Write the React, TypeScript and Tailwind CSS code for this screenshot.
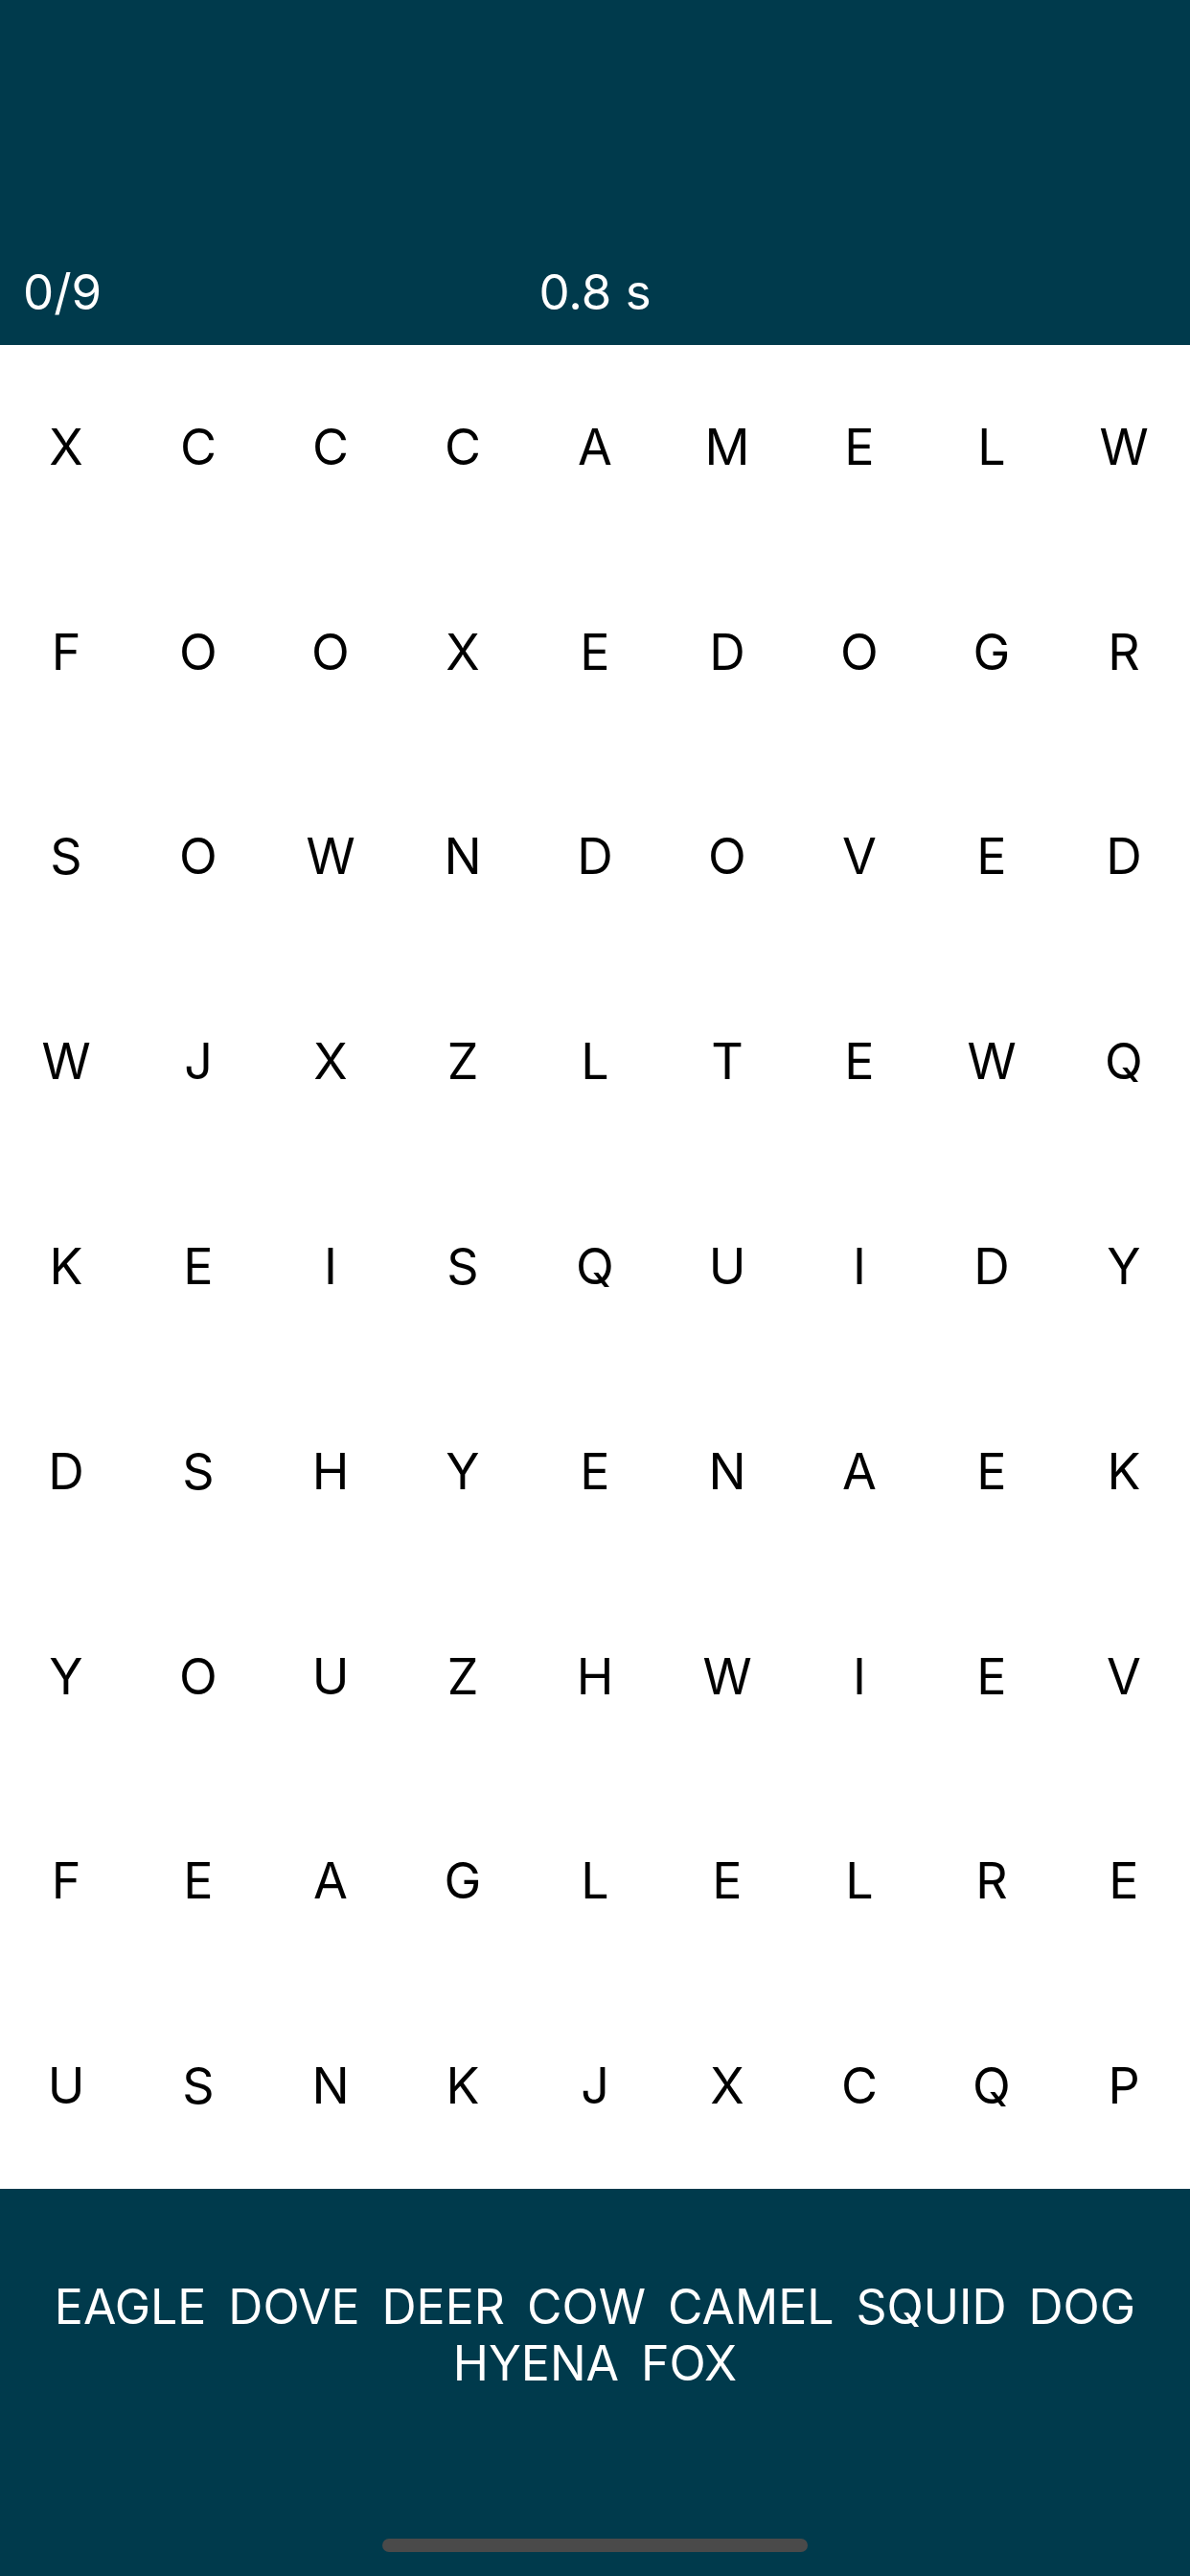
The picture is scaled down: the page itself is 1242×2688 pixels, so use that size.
import React from 'react';

const GRID: string[] = [
  'XCCCAMELW',
  'FOOXEDOGR',
  'SOWNDOVED',
  'WJXZLTEWQ',
  'KEISQUIDY',
  'DSHYENAEK',
  'YOUZHWIEV',
  'FEAGLELRE',
  'USNKJXCQP',
];

const WORDS = ['EAGLE', 'DOVE', 'DEER', 'COW', 'CAMEL', 'SQUID', 'DOG', 'HYENA', 'FOX'];

const found = 0;
const elapsed = 0.8;

export default function App() {
  return (
    <div className="flex flex-col w-[1242px] h-[2688px] bg-white font-['Inter',sans-serif]">
      {/* Header */}
      <div className="h-[360px] bg-[#003a4c] flex items-end pb-[29px] px-[24px] text-white">
        <div className="grid grid-cols-3 w-full text-[51px] leading-[52px]">
          <span>{found}/{WORDS.length}</span>
          <span className="text-center">{elapsed} s</span>
          <span />
        </div>
      </div>

      {/* Letter grid */}
      <div className="h-[1924px] grid grid-cols-9 grid-rows-9">
        {GRID.map((row, r) =>
          row.split('').map((ch, c) => (
            <div
              key={`${r}-${c}`}
              className="flex items-center justify-center text-[52px] leading-none text-black"
            >
              {ch}
            </div>
          ))
        )}
      </div>

      {/* Word list */}
      <div className="flex-1 bg-[#003a4c] flex flex-col items-center pt-[94px] px-[40px]">
        <div className="flex flex-wrap justify-center gap-x-[23px] text-white text-[50px] leading-[59px]">
          {WORDS.map((w) => (
            <span key={w}>{w}</span>
          ))}
        </div>
        <div className="mt-auto mb-[25px] w-[444px] h-[14px] rounded-full bg-[#4a4a4a]" />
      </div>
    </div>
  );
}
